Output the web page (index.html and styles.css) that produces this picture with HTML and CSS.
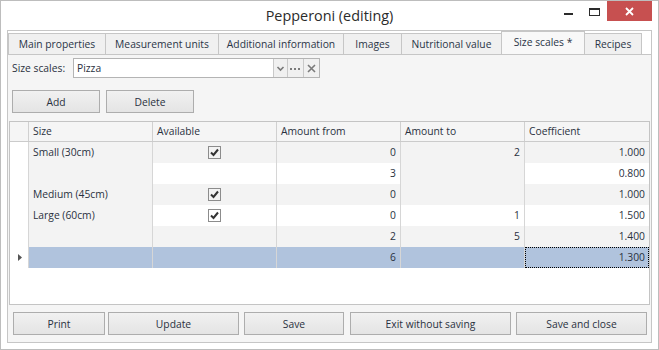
FILE: index.html
```html
<!DOCTYPE html>
<html>
<head>
<meta charset="utf-8">
<title>Pepperoni (editing)</title>
<link rel="stylesheet" href="styles.css">
</head>
<body>
<div class="window">
  <div class="titlebar">
    <div class="title">Pepperoni (editing)</div>
    <div class="controls">
      <span class="ctl min"><svg width="26" height="20" viewBox="0 0 26 20"><rect x="9" y="12" width="9" height="2" fill="#2b2b2b"/></svg></span>
      <span class="ctl max"><svg width="26" height="20" viewBox="0 0 26 20"><rect x="8.5" y="7.5" width="10" height="7" fill="none" stroke="#2b2b2b" stroke-width="1"/><rect x="8" y="7" width="11" height="2" fill="#2b2b2b"/></svg></span>
      <span class="ctl close"><svg width="45" height="20" viewBox="0 0 45 20"><path d="M19 7 L26 14 M26 7 L19 14" stroke="#fff" stroke-width="1.8" fill="none"/></svg></span>
    </div>
  </div>
  <div class="tabctl">
    <div class="tabstrip">
      <div class="tab t1">Main properties</div>
      <div class="tab t2">Measurement units</div>
      <div class="tab t3">Additional information</div>
      <div class="tab t4">Images</div>
      <div class="tab t5">Nutritional value</div>
      <div class="tab t6 active">Size scales *</div>
      <div class="tab t7">Recipes</div>
    </div>
    <div class="page">
      <div class="filter">
        <span class="flabel">Size scales:</span>
        <div class="combo">
          <span class="cval">Pizza</span>
          <span class="cbtn cb-drop"><svg width="13" height="18" viewBox="0 0 13 18"><path d="M3.5 8 L6.5 11 L9.5 8" stroke="#7a7a7a" stroke-width="1.6" fill="none"/></svg></span>
          <span class="cbtn"><svg width="15" height="18" viewBox="0 0 15 18"><rect x="2" y="9" width="2" height="2" fill="#7a7a7a"/><rect x="6" y="9" width="2" height="2" fill="#7a7a7a"/><rect x="10" y="9" width="2" height="2" fill="#7a7a7a"/></svg></span>
          <span class="cbtn"><svg width="15" height="18" viewBox="0 0 15 18"><path d="M4 6 L11 13 M11 6 L4 13" stroke="#7a7a7a" stroke-width="1.6" fill="none"/></svg></span>
        </div>
      </div>
      <div class="toolbar">
        <button class="btn bw88">Add</button>
        <button class="btn bw88">Delete</button>
      </div>
      <div class="grid">
        <div class="row head">
          <div class="cell ind"></div>
          <div class="cell">Size</div>
          <div class="cell">Available</div>
          <div class="cell">Amount from</div>
          <div class="cell">Amount to</div>
          <div class="cell">Coefficient</div>
        </div>
        <div class="row">
          <div class="cell ind"></div>
          <div class="cell g">Small (30cm)</div>
          <div class="cell g chk"><span class="cbx"><svg width="11" height="11" viewBox="0 0 11 11"><path d="M2 5.5 L4.5 8 L9 2.5" stroke="#333" stroke-width="2" fill="none"/></svg></span></div>
          <div class="cell g num">0</div>
          <div class="cell g num">2</div>
          <div class="cell g num">1.000</div>
        </div>
        <div class="row">
          <div class="cell ind"></div>
          <div class="cell g"></div>
          <div class="cell w"></div>
          <div class="cell w num">3</div>
          <div class="cell g num"></div>
          <div class="cell w num">0.800</div>
        </div>
        <div class="row">
          <div class="cell ind"></div>
          <div class="cell g">Medium (45cm)</div>
          <div class="cell g chk"><span class="cbx"><svg width="11" height="11" viewBox="0 0 11 11"><path d="M2 5.5 L4.5 8 L9 2.5" stroke="#333" stroke-width="2" fill="none"/></svg></span></div>
          <div class="cell g num">0</div>
          <div class="cell g num"></div>
          <div class="cell g num">1.000</div>
        </div>
        <div class="row">
          <div class="cell ind"></div>
          <div class="cell g">Large (60cm)</div>
          <div class="cell w chk"><span class="cbx"><svg width="11" height="11" viewBox="0 0 11 11"><path d="M2 5.5 L4.5 8 L9 2.5" stroke="#333" stroke-width="2" fill="none"/></svg></span></div>
          <div class="cell w num">0</div>
          <div class="cell w num">1</div>
          <div class="cell w num">1.500</div>
        </div>
        <div class="row">
          <div class="cell ind"></div>
          <div class="cell g"></div>
          <div class="cell g"></div>
          <div class="cell g num">2</div>
          <div class="cell g num">5</div>
          <div class="cell g num">1.400</div>
        </div>
        <div class="row sel">
          <div class="cell ind"><svg width="18" height="20" viewBox="0 0 18 20"><path d="M8 7 L12 10.5 L8 14 Z" fill="#555"/></svg></div>
          <div class="cell s"></div>
          <div class="cell s"></div>
          <div class="cell s num">6</div>
          <div class="cell s num"></div>
          <div class="cell s num focus">1.300</div>
        </div>
      </div>
      <div class="footer">
        <button class="btn b-print">Print</button>
        <button class="btn b-update">Update</button>
        <button class="btn b-save">Save</button>
        <button class="btn b-exit">Exit without saving</button>
        <button class="btn b-close">Save and close</button>
      </div>
    </div>
  </div>
</div>
</body>
</html>
```

FILE: styles.css
```css
* { box-sizing: border-box; }
html, body { margin: 0; padding: 0; }
body {
  width: 659px;
  height: 350px;
  overflow: hidden;
  background: #ffffff;
  font-family: "Open Sans", "Noto Sans", sans-serif;
  font-size: 10.3px;
  color: #2a313e;
}
.window {
  width: 659px;
  height: 350px;
  border: 1px solid #bdbdbd;
  background: #ffffff;
  display: flex;
  flex-direction: column;
}
.titlebar {
  height: 29px;
  flex: none;
  display: grid;
  grid-template-columns: 1fr auto 1fr;
}
.title {
  grid-column: 2;
  font-size: 14.4px;
  line-height: 30px;
  color: #2b2b2b;
}
.controls {
  grid-column: 3;
  justify-self: end;
  display: flex;
  height: 20px;
  margin-right: 6px;
}
.ctl { display: block; height: 20px; }
.ctl svg { display: block; }
.ctl.min, .ctl.max { width: 26px; }
.ctl.close { width: 45px; background: #c75050; }

.tabctl {
  flex: 1;
  margin: 0 6px 6px;
  border: 1px solid #c6c6c6;
  display: flex;
  flex-direction: column;
}
.tabstrip {
  height: 24px;
  flex: none;
  display: flex;
  align-items: flex-end;
  border-bottom: 1px solid #c6c6c6;
}
.tab {
  height: 21px;
  border: 1px solid #c6c6c6;
  border-bottom: none;
  margin-right: -1px;
  background: #f0f0f0;
  color: #2a3547;
  text-align: center;
  line-height: 20px;
  white-space: nowrap;
}
.tab.active { height: 23px; background: #f8f8f8; line-height: 21px; }
.t1 { width: 98px; }
.t2 { width: 114px; }
.t3 { width: 126px; }
.t4 { width: 59px; }
.t5 { width: 101px; }
.t6 { width: 84px; }
.t7 { width: 58px; }

.page {
  flex: 1;
  background: #f5f5f5;
  display: flex;
  flex-direction: column;
  padding: 3px 0 7px;
}
.filter {
  height: 20px;
  flex: none;
  display: flex;
  align-items: center;
  padding-left: 4px;
}
.flabel { width: 61px; }
.combo {
  width: 247px;
  height: 20px;
  border: 1px solid #b4b4b4;
  background: #ffffff;
  display: flex;
}
.cval { flex: 1; padding-left: 3px; line-height: 18px; }
.cbtn {
  width: 16px;
  border-left: 1px solid #c9c9c9;
  background: #f0f0f0;
}
.cbtn.cb-drop { width: 14px; }
.cbtn svg { display: block; }

.toolbar {
  margin-top: 12px;
  height: 23px;
  flex: none;
  display: flex;
  gap: 6px;
  padding-left: 4px;
}
.btn {
  height: 23px;
  border: 1px solid #adadad;
  background: linear-gradient(#f1f1f1, #e4e4e4);
  font-family: inherit;
  font-size: 10.3px;
  color: #2a313e;
  padding: 0;
  margin: 0;
}
.bw88 { width: 88px; }

.grid {
  margin-top: 8px;
  margin-left: 1px;
  width: 641px;
  height: 184px;
  flex: none;
  border: 1px solid #c4c4c4;
  background: #ffffff;
}
.row {
  display: grid;
  grid-template-columns: 19px repeat(5, 124px);
  height: 21px;
}
.row.head { height: 20px; border-bottom: 1px solid #cbcbcb; background: #f5f5f5; }
.cell {
  border-right: 1px solid #d6d6d6;
  padding: 0 4px;
  line-height: 20px;
  white-space: nowrap;
  overflow: hidden;
}
.cell:last-child { border-right: none; }
.head .cell { line-height: 19px; border-right-color: #d0d0d0; }
.cell.ind { padding: 0; background: #ffffff; }
.head .cell.ind { background: #f5f5f5; }
.cell.ind svg { display: block; }
.cell.g { background: #f3f3f3; }
.cell.w { background: #ffffff; }
.cell.s { background: #b0c3dd; }
.cell.num { text-align: right; }
.cell.focus { outline: 1px dotted #000; outline-offset: -1px; }
.cell.chk { display: flex; align-items: center; justify-content: center; }
.cbx {
  width: 13px;
  height: 13px;
  border: 1px solid #8c8c8c;
  display: block;
}
.cbx svg { display: block; }

.footer {
  margin-top: 7px;
  height: 23px;
  flex: none;
  display: flex;
}
.b-print { width: 92px; margin-left: 5px; }
.b-update { width: 131px; margin-left: 3px; }
.b-save { width: 100px; margin-left: 5px; }
.b-exit { width: 161px; margin-left: 6px; }
.b-close { width: 131px; margin-left: 5px; }
```
